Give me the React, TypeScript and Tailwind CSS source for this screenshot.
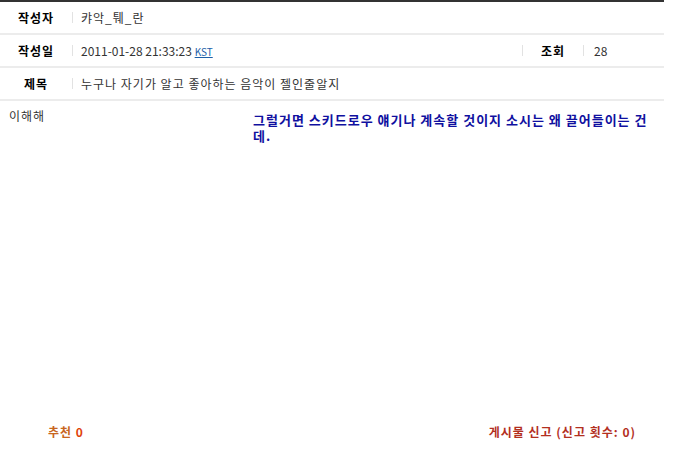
import { FC } from "react";

const Sep: FC = () => <span className="inline-block w-px h-[11px] bg-[#e2e2e2]" />;

const Row: FC<{ label: string; children: React.ReactNode; right?: React.ReactNode }> = ({
  label,
  children,
  right,
}) => (
  <div className="flex items-center h-[33px] border-b-2 border-[#ececec]">
    <div className="w-[72px] text-center font-bold text-[12px] text-black tracking-[1px]">{label}</div>
    <Sep />
    <div className="flex-1 pl-[8px] text-[12px] text-[#333]">{children}</div>
    {right}
  </div>
);

const App: FC = () => {
  return (
    <div className="w-[674px] h-[452px] bg-white font-['Noto_Sans_CJK_KR',sans-serif] leading-none">
      <div className="w-[664px] border-t-2 border-[#333]">
        <Row label="작성자">
          <span className="tracking-[1px]">캬악_퉤_란</span>
        </Row>
        <Row
          label="작성일"
          right={
            <div className="flex items-center">
              <Sep />
              <div className="w-[60px] text-center font-bold text-[12px] text-black tracking-[1px]">조회</div>
              <Sep />
              <div className="w-[80px] pl-[10px] text-[12px] text-[#333]">28</div>
            </div>
          }
        >
          2011-01-28 21:33:23{" "}
          <span className="text-[10px] text-[#1d5fa8] underline">KST</span>
        </Row>
        <Row label="제목">
          <span className="tracking-[1px]">누구나 자기가 알고 좋아하는 음악이 젤인줄알지</span>
        </Row>
      </div>

      <div className="flex h-[316px] pt-[7px]">
        <div className="w-[253px] pl-[9px] text-[12px] text-[#333] leading-[16px] tracking-[1px]">이해해</div>
        <div className="w-[400px] pt-[4px] text-[13px] font-bold text-[#1010a0] leading-[16px] tracking-[1px]">
          그럴거면 스키드로우 얘기나 계속할 것이지 소시는 왜 끌어들이는 건 데.
        </div>
      </div>

      <div className="flex items-center justify-between w-[664px] h-[30px] pl-[48px] pr-[28px] text-[12px] font-bold tracking-[1px]">
        <div>
          <span className="text-[#c8661e]">추천</span>{" "}
          <span className="text-[#e0420a]">0</span>
        </div>
        <div className="text-[#b3301f]">게시물 신고 (신고 횟수: 0)</div>
      </div>
    </div>
  );
};

export default App;
